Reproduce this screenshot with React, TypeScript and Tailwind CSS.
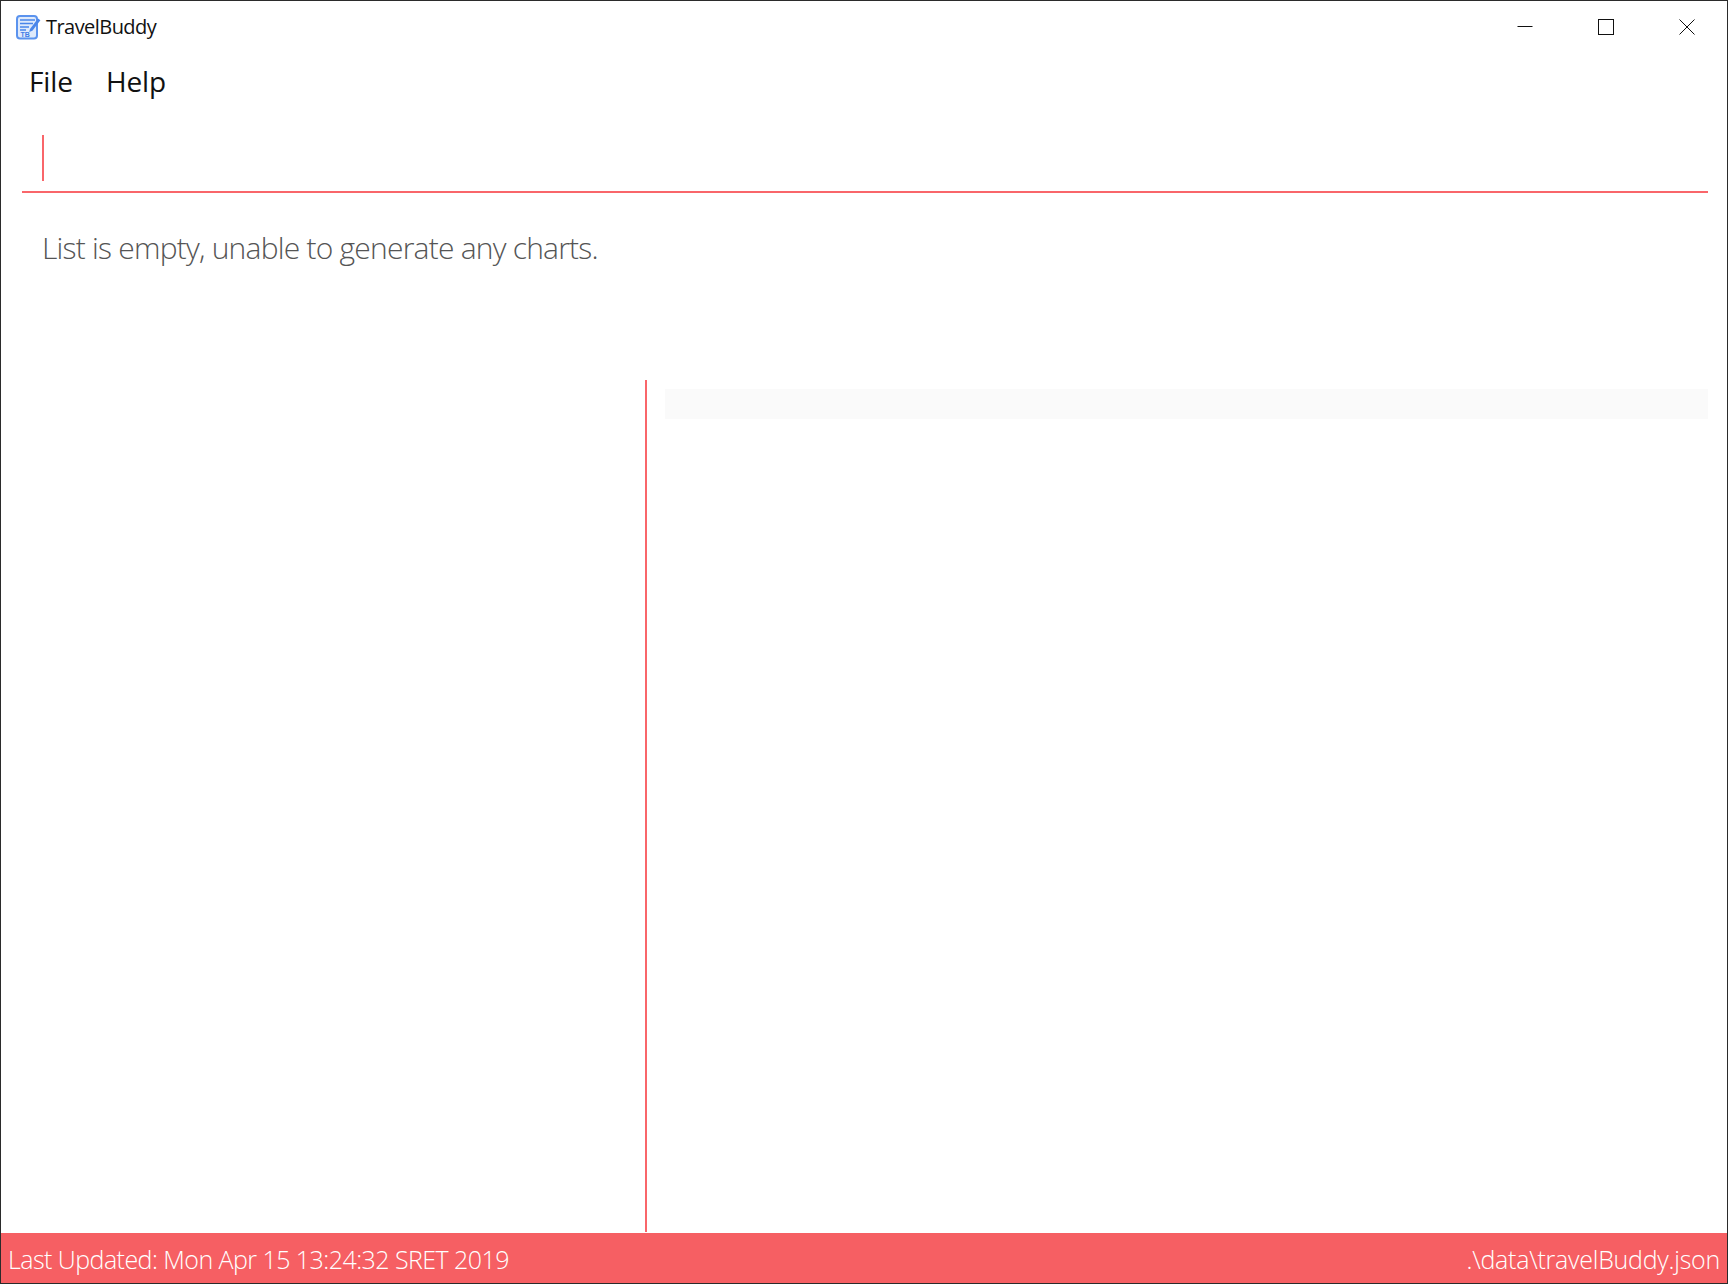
const RED = 'bg-[#f65f63]'

function AppIcon() {
  return (
    <svg width="25" height="26" viewBox="0 0 25 26" fill="none" className="shrink-0">
      <rect x="1" y="2" width="20" height="22.5" rx="3" stroke="#5b93ee" strokeWidth="2" fill="#dfeafb" />
      <path d="M4 6h15M4 9.5h13M4 13h9M4 16h6" stroke="#4a86ea" strokeWidth="1.5" />
      <path d="M14 15L22 4.5l2.4 1.8-8 10.5-3.2 1.2z" fill="#4a86ea" />
      <text x="4.5" y="22.7" fontSize="7" fontWeight="700" fill="#3f7de6" fontFamily="Liberation Sans, sans-serif">TB</text>
    </svg>
  )
}

function WindowControls() {
  return (
    <div className="flex items-start h-full">
      <div className="w-[81px] h-[52px] flex items-center justify-center">
        <svg width="16" height="16" viewBox="0 0 16 16"><path d="M0.5 7.5h15" stroke="#111" /></svg>
      </div>
      <div className="w-[81px] h-[52px] flex items-center justify-center">
        <svg width="16" height="16" viewBox="0 0 16 16"><rect x="0.5" y="0.5" width="15" height="15" fill="none" stroke="#111" /></svg>
      </div>
      <div className="w-[81px] h-[52px] flex items-center justify-center">
        <svg width="16" height="16" viewBox="0 0 16 16"><path d="M0.5 0.5l15 15M15.5 0.5l-15 15" stroke="#111" /></svg>
      </div>
    </div>
  )
}

export default function App() {
  return (
    <div className="w-[1728px] h-[1284px] flex flex-col bg-white border border-[#2b2b2b] overflow-hidden font-['Open_Sans','Noto_Sans',sans-serif]">
      <div className="h-[52px] flex justify-between shrink-0">
        <div className="flex items-center pl-[15px] pb-[1px]">
          <AppIcon />
          <span className="ml-[5px] text-[20px] text-[#111] tracking-[-0.55px]">TravelBuddy</span>
        </div>
        <WindowControls />
      </div>

      <div className="h-[60px] flex items-center gap-[33px] pl-[28px] pb-[5px] text-[28px] text-[#111] tracking-[-0.1px] shrink-0">
        <span>File</span>
        <span>Help</span>
      </div>

      <div className="h-[80px] ml-[21px] mr-[19px] pl-[20px] pt-[22px] border-b-2 border-[#f9666a] shrink-0">
        <div className="w-[2px] h-[46px] bg-[#f9666a]" />
      </div>

      <div className="h-[187px] pl-[41px] pt-[33px] text-[30px] font-light text-[#555] tracking-[-0.78px] leading-[44px] shrink-0">
        List is empty, unable to generate any charts.
      </div>

      <div className="flex-1 flex min-h-0 pb-px">
        <div className="w-[646px] border-r-2 border-[#f9666a] shrink-0" />
        <div className="flex-1 pl-[18px] pr-[19px] pt-[9px]">
          <div className="h-[30px] bg-[#fafafa]" />
        </div>
      </div>

      <div className={`h-[50px] ${RED} flex items-center justify-between px-[7px] pt-[3px] text-[25px] font-light text-white shrink-0`}>
        <span className="tracking-[-0.55px]">Last Updated: Mon Apr 15 13:24:32 SRET 2019</span>
        <span className="tracking-[-0.25px]">.\data\travelBuddy.json</span>
      </div>
    </div>
  )
}
